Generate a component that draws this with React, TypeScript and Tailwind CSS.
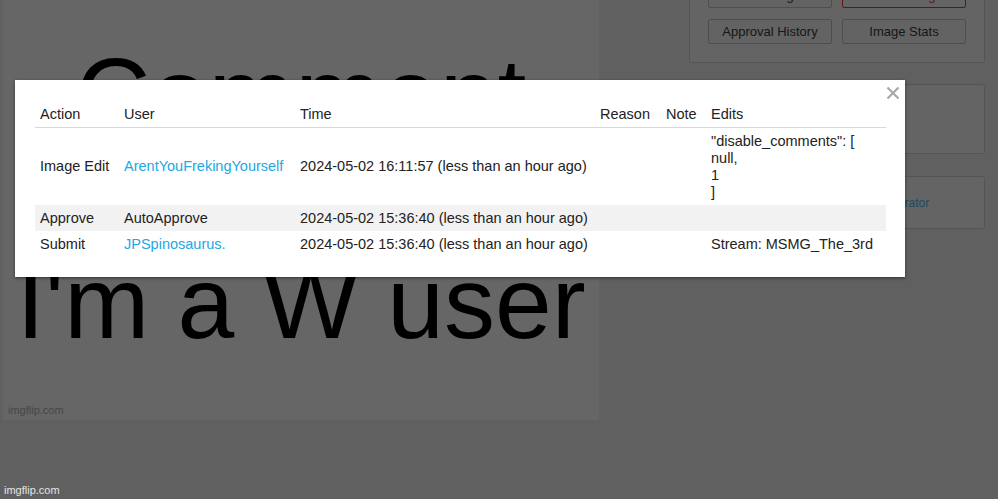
import React from "react";

type Row = {
  action: string;
  user: string;
  userLink: boolean;
  time: string;
  edits: string[];
  shaded?: boolean;
};

const rows: Row[] = [
  {
    action: "Image Edit",
    user: "ArentYouFrekingYourself",
    userLink: true,
    time: "2024-05-02 16:11:57 (less than an hour ago)",
    edits: ['"disable_comments": [', "null,", "1", "]"],
  },
  {
    action: "Approve",
    user: "AutoApprove",
    userLink: false,
    time: "2024-05-02 15:36:40 (less than an hour ago)",
    edits: [],
    shaded: true,
  },
  {
    action: "Submit",
    user: "JPSpinosaurus.",
    userLink: true,
    time: "2024-05-02 15:36:40 (less than an hour ago)",
    edits: ["Stream: MSMG_The_3rd"],
  },
];

function SideButton({ label, danger }: { label: string; danger?: boolean }) {
  return (
    <button
      className={
        danger
          ? "h-[25px] w-[124px] rounded-[2px] border border-[#e23a3a] bg-[#fafafa] text-[13px] text-[#e23a3a]"
          : "h-[25px] w-[124px] rounded-[2px] border border-[#c4c4c4] bg-[#f7f7f7] text-[13px] text-[#3a3a3a]"
      }
    >
      {label}
    </button>
  );
}

export default function App() {
  return (
    <div className="relative h-[499px] w-[998px] overflow-hidden bg-[#f0f0f0] font-['Liberation_Sans',Arial,sans-serif]">
      {/* page behind the dialog */}
      <div className="flex pl-[3px]">
        <div className="relative h-[420px] w-[596px] bg-white text-center text-black">
          <div className="pt-[43px] text-[104px] leading-none">Comment</div>
          <div className="mt-[105px] text-[102px] leading-none">I'm a W user</div>
          <span className="absolute bottom-[2px] left-[5px] text-[11px] text-[#b0b0b0]">imgflip.com</span>
        </div>

        <aside className="ml-[90px] flex w-[296px] flex-col">
          <div className="-mt-[36px] rounded-[3px] border border-[#d2d2d2] bg-[#fbfbfb] p-[18px]">
            <div className="grid grid-cols-[124px_124px] gap-x-[10px] gap-y-[11px]">
              <SideButton label="Edit Image" />
              <SideButton label="Delete Image" danger />
              <SideButton label="Approval History" />
              <SideButton label="Image Stats" />
            </div>
          </div>
          <div className="mt-[21px] h-[70px] rounded-[3px] border border-[#d2d2d2] bg-[#fbfbfb]" />
          <div className="mt-[22px] flex h-[53px] items-center justify-center rounded-[3px] border border-[#d2d2d2] bg-[#fbfbfb]">
            <a className="pr-[3px] text-[12px] text-[#4fb8f0]">Made with Imgflip Meme Generator</a>
          </div>
        </aside>
      </div>

      {/* dimming backdrop */}
      <div className="absolute inset-0 bg-black/60" />

      {/* approval history dialog */}
      <div className="absolute left-[15px] top-[80px] w-[890px] bg-white pb-[20px] pl-[20px] pr-[19px] pt-[21px] shadow-[0_1px_3px_rgba(0,0,0,0.5)]">
        <button className="absolute right-[4px] top-[5px] flex h-[16px] w-[16px] items-center justify-center">
          <svg width="14" height="14" viewBox="0 0 14 14">
            <path d="M1.5 1.5 L12.5 12.5 M12.5 1.5 L1.5 12.5" stroke="#a8a8a8" strokeWidth="2.2" strokeLinecap="butt" />
          </svg>
        </button>
        <table className="w-[851px] table-fixed border-collapse text-left text-[14.5px] leading-[17px] text-[#222]">
          <colgroup>
            <col className="w-[84px]" />
            <col className="w-[176px]" />
            <col className="w-[300px]" />
            <col className="w-[66px]" />
            <col className="w-[45px]" />
            <col className="w-[180px]" />
          </colgroup>
          <thead>
            <tr className="border-b border-[#d8d8d8]">
              <th className="px-[5px] py-[4.5px] font-normal">Action</th>
              <th className="px-[5px] py-[4.5px] font-normal">User</th>
              <th className="px-[5px] py-[4.5px] font-normal">Time</th>
              <th className="px-[5px] py-[4.5px] font-normal">Reason</th>
              <th className="px-[5px] py-[4.5px] font-normal">Note</th>
              <th className="px-[5px] py-[4.5px] font-normal">Edits</th>
            </tr>
          </thead>
          <tbody>
            {rows.map((r) => (
              <tr key={r.action} className={r.shaded ? "bg-[#f2f2f2]" : ""}>
                <td className="whitespace-nowrap px-[5px] py-[4.5px] align-middle">{r.action}</td>
                <td className="whitespace-nowrap px-[5px] py-[4.5px] align-middle">
                  {r.userLink ? <a className="text-[#22a8e2]">{r.user}</a> : r.user}
                </td>
                <td className="whitespace-nowrap px-[5px] py-[4.5px] align-middle">{r.time}</td>
                <td className="px-[5px] py-[4.5px]" />
                <td className="px-[5px] py-[4.5px]" />
                <td className="whitespace-nowrap px-[5px] py-[4.5px] align-middle">
                  {r.edits.map((line, i) => (
                    <div key={i}>{line}</div>
                  ))}
                </td>
              </tr>
            ))}
          </tbody>
        </table>
      </div>

      <span className="absolute bottom-[1px] left-[4px] text-[11px] text-[#e4e4e4]">imgflip.com</span>
    </div>
  );
}
